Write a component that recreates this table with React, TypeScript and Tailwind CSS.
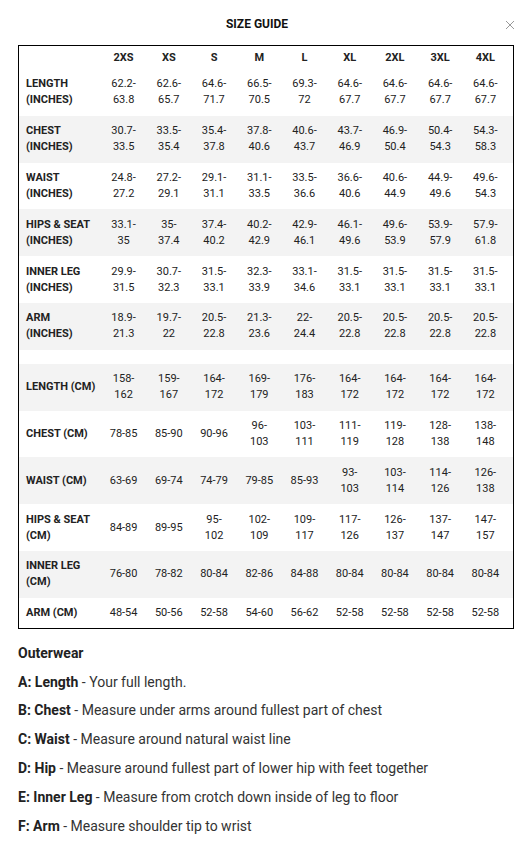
import React from "react";

const sizes = ["2XS", "XS", "S", "M", "L", "XL", "2XL", "3XL", "4XL"];

// inch rows then cm rows, gray flag alternates
const inchRows = [
  { label: "LENGTH\n(INCHES)", values: ["62.2-63.8", "62.6-65.7", "64.6-71.7", "66.5-70.5", "69.3-72", "64.6-67.7", "64.6-67.7", "64.6-67.7", "64.6-67.7"] },
  { label: "CHEST\n(INCHES)", values: ["30.7-33.5", "33.5-35.4", "35.4-37.8", "37.8-40.6", "40.6-43.7", "43.7-46.9", "46.9-50.4", "50.4-54.3", "54.3-58.3"] },
  { label: "WAIST\n(INCHES)", values: ["24.8-27.2", "27.2-29.1", "29.1-31.1", "31.1-33.5", "33.5-36.6", "36.6-40.6", "40.6-44.9", "44.9-49.6", "49.6-54.3"] },
  { label: "HIPS & SEAT\n(INCHES)", values: ["33.1-35", "35-37.4", "37.4-40.2", "40.2-42.9", "42.9-46.1", "46.1-49.6", "49.6-53.9", "53.9-57.9", "57.9-61.8"] },
  { label: "INNER LEG\n(INCHES)", values: ["29.9-31.5", "30.7-32.3", "31.5-33.1", "32.3-33.9", "33.1-34.6", "31.5-33.1", "31.5-33.1", "31.5-33.1", "31.5-33.1"] },
  { label: "ARM\n(INCHES)", values: ["18.9-21.3", "19.7-22", "20.5-22.8", "21.3-23.6", "22-24.4", "20.5-22.8", "20.5-22.8", "20.5-22.8", "20.5-22.8"] },
];

const cmRows = [
  { label: "LENGTH (CM)", values: ["158-162", "159-167", "164-172", "169-179", "176-183", "164-172", "164-172", "164-172", "164-172"] },
  { label: "CHEST (CM)", values: ["78-85", "85-90", "90-96", "96-103", "103-111", "111-119", "119-128", "128-138", "138-148"] },
  { label: "WAIST (CM)", values: ["63-69", "69-74", "74-79", "79-85", "85-93", "93-103", "103-114", "114-126", "126-138"] },
  { label: "HIPS & SEAT\n(CM)", values: ["84-89", "89-95", "95-102", "102-109", "109-117", "117-126", "126-137", "137-147", "147-157"] },
  { label: "INNER LEG\n(CM)", values: ["76-80", "78-82", "80-84", "82-86", "84-88", "80-84", "80-84", "80-84", "80-84"] },
  { label: "ARM (CM)", values: ["48-54", "50-56", "52-58", "54-60", "56-62", "52-58", "52-58", "52-58", "52-58"] },
];

const notes = [
  { key: "A: Length", text: "Your full length." },
  { key: "B: Chest", text: "Measure under arms around fullest part of chest" },
  { key: "C: Waist", text: "Measure around natural waist line" },
  { key: "D: Hip", text: "Measure around fullest part of lower hip with feet together" },
  { key: "E: Inner Leg", text: "Measure from crotch down inside of leg to floor" },
  { key: "F: Arm", text: "Measure shoulder tip to wrist" },
];

function Row({ label, values, gray, last }: { label: string; values: string[]; gray: boolean; last?: boolean }) {
  return (
    <div className={`flex items-center pl-[4px] pr-[5px] ${last ? "h-[30px]" : "h-[46.8px]"} ${gray ? "bg-[#f3f3f3]" : "bg-white"}`}>
      <div className="w-[78px] shrink-0 pl-[3px] font-bold whitespace-pre-line">{label}</div>
      {values.map((v, i) => (
        <div key={i} className="flex-1 min-w-0 px-[7px] text-center">
          {v}
        </div>
      ))}
    </div>
  );
}

export default function App() {
  return (
    <div className="w-[529px] bg-white text-[#222] font-['Roboto',sans-serif] pb-[10px]">
      {/* title */}
      <div className="relative h-[45px] pt-[16px] pr-[15px] text-center">
        <h2 className="text-[12px] leading-[16px] font-bold text-[#111]">SIZE GUIDE</h2>
        <button className="absolute right-[14px] top-[20px] w-[10px] h-[10px]">
          <svg viewBox="0 0 10 10" width="10" height="10">
            <path d="M1 1 L9 9 M9 1 L1 9" stroke="#999" strokeWidth="1" />
          </svg>
        </button>
      </div>

      {/* table */}
      <div className="ml-[18px] w-[496px] border border-black text-[11px] leading-[16px]">
        <div className="flex items-center h-[23px] pl-[4px] pr-[5px] font-bold">
          <div className="w-[78px] shrink-0" />
          {sizes.map((s) => (
            <div key={s} className="flex-1 text-center">
              {s}
            </div>
          ))}
        </div>
        {inchRows.map((r, i) => (
          <Row key={r.label} label={r.label} values={r.values} gray={i % 2 === 1} />
        ))}
        <div className="h-[14px]" />
        {cmRows.map((r, i) => (
          <Row key={r.label} label={r.label} values={r.values} gray={i % 2 === 0} last={i === cmRows.length - 1} />
        ))}
      </div>

      {/* measuring notes */}
      <div className="ml-[18px] mt-[14px] flex flex-col gap-[8.8px] text-[14px] leading-[20px] text-[#222]">
        <p className="font-bold">Outerwear</p>
        {notes.map((n) => (
          <p key={n.key}>
            <span className="font-bold">{n.key}</span>
            <span className="text-[#333]"> - {n.text}</span>
          </p>
        ))}
      </div>
    </div>
  );
}
